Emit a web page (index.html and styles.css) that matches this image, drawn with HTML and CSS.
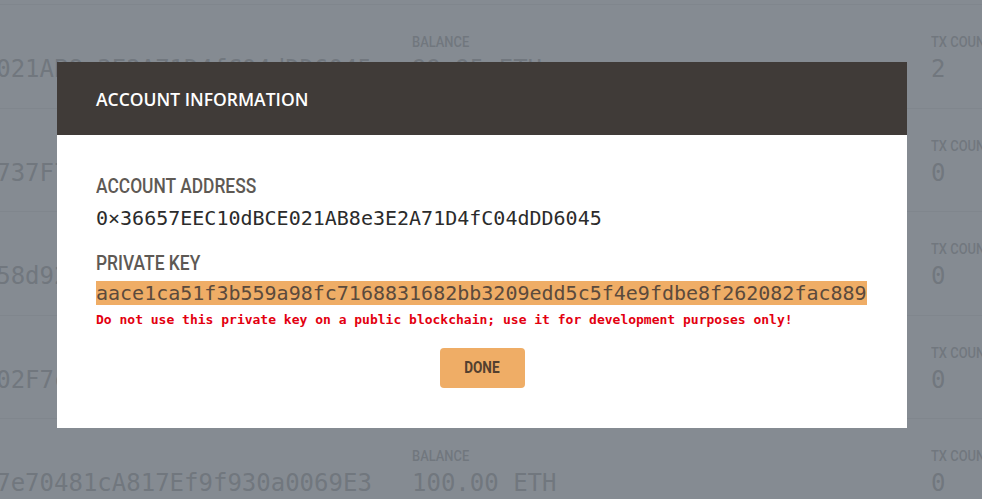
FILE: index.html
```html
<!DOCTYPE html>
<html lang="en">
<head>
<meta charset="utf-8">
<title>Accounts</title>
<link rel="stylesheet" href="styles.css">
</head>
<body>
<div class="accounts">
  <div class="row">
    <div class="cell cell-address"><div class="label">ADDRESS</div><div class="value">0x0Fa1c93E4b7D2e58C6a0B9174dE3f2A8c5B01d9E</div></div>
    <div class="cell cell-balance"><div class="label">BALANCE</div><div class="value">100.00 ETH</div></div>
    <div class="cell cell-tx"><div class="label">TX COUNT</div><div class="value">0</div></div>
  </div>
  <div class="row">
    <div class="cell cell-address"><div class="label">ADDRESS</div><div class="value">0x36657EEC10dBCE021AB8e3E2A71D4fC04dDD6045</div></div>
    <div class="cell cell-balance"><div class="label">BALANCE</div><div class="value">99.95 ETH</div></div>
    <div class="cell cell-tx"><div class="label">TX COUNT</div><div class="value">2</div></div>
  </div>
  <div class="row">
    <div class="cell cell-address"><div class="label">ADDRESS</div><div class="value">0xA1c94fE20b3D85737F7c2A4e0B19d5C83f1aB479</div></div>
    <div class="cell cell-balance"><div class="label">BALANCE</div><div class="value">100.00 ETH</div></div>
    <div class="cell cell-tx"><div class="label">TX COUNT</div><div class="value">0</div></div>
  </div>
  <div class="row">
    <div class="cell cell-address"><div class="label">ADDRESS</div><div class="value">0x4C7e2b90aF13dE58d92Ab0c41F7e3D9b2A06c8e1</div></div>
    <div class="cell cell-balance"><div class="label">BALANCE</div><div class="value">100.00 ETH</div></div>
    <div class="cell cell-tx"><div class="label">TX COUNT</div><div class="value">0</div></div>
  </div>
  <div class="row">
    <div class="cell cell-address"><div class="label">ADDRESS</div><div class="value">0x9bE3a47C1d05F802F7c6B4A9d13e85F0a72cB1d4</div></div>
    <div class="cell cell-balance"><div class="label">BALANCE</div><div class="value">100.00 ETH</div></div>
    <div class="cell cell-tx"><div class="label">TX COUNT</div><div class="value">0</div></div>
  </div>
  <div class="row">
    <div class="cell cell-address"><div class="label">ADDRESS</div><div class="value">0xD2f85a3B61c9E07e70481cA817Ef9f930a0069E3</div></div>
    <div class="cell cell-balance"><div class="label">BALANCE</div><div class="value">100.00 ETH</div></div>
    <div class="cell cell-tx"><div class="label">TX COUNT</div><div class="value">0</div></div>
  </div>
</div>

<div class="overlay">
  <div class="modal">
    <div class="modal-header">
      <h2 class="modal-title">ACCOUNT INFORMATION</h2>
    </div>
    <div class="modal-body">
      <h3 class="field-label">ACCOUNT ADDRESS</h3>
      <div class="mono-line">0×36657EEC10dBCE021AB8e3E2A71D4fC04dDD6045</div>
      <h3 class="field-label field-label-key">PRIVATE KEY</h3>
      <div class="mono-line key-line"><span class="key">aace1ca51f3b559a98fc7168831682bb3209edd5c5f4e9fdbe8f262082fac889</span></div>
      <div class="warning">Do not use this private key on a public blockchain; use it for development purposes only!</div>
      <div class="actions">
        <button class="btn-done" type="button"><span class="btn-text">DONE</span></button>
      </div>
    </div>
  </div>
</div>
</body>
</html>
```

FILE: styles.css
```css
html, body {
  margin: 0;
  padding: 0;
}

body {
  width: 982px;
  height: 499px;
  overflow: hidden;
  background: #ffffff;
  font-family: "Liberation Sans", Arial, sans-serif;
}

.accounts {
  margin-top: -98.5px;
}

.row {
  box-sizing: border-box;
  height: 103.5px;
  border-bottom: 1px solid #e4e4e4;
  display: flex;
  padding-top: 30px;
}

.cell-address {
  margin-left: -235px;
  width: 647px;
  flex: none;
}

.cell-balance {
  width: 519px;
  flex: none;
}

.cell-tx {
  flex: none;
  white-space: nowrap;
}

.label {
  font-family: "Roboto", sans-serif;
  font-weight: 500;
  font-size: 15px;
  line-height: 15px;
  color: #9c9c9c;
  white-space: nowrap;
  transform: scaleX(0.86);
  transform-origin: left center;
}

.value {
  margin-top: 7px;
  font-family: "DejaVu Sans Mono", "Liberation Mono", monospace;
  font-size: 24px;
  line-height: 24px;
  color: #999999;
  white-space: nowrap;
}

.overlay {
  position: fixed;
  inset: 0;
  background: rgba(103, 110, 119, 0.8);
  display: flex;
  align-items: flex-start;
  padding: 62px 0 0 57px;
}

.modal {
  width: 850px;
  background: #ffffff;
}

.modal-header {
  height: 73px;
  background: #403b38;
  padding: 0 39px;
  display: flex;
  align-items: center;
}

.modal-title {
  margin: 0;
  font-family: "Open Sans", sans-serif;
  font-weight: 600;
  font-size: 17.5px;
  color: #ffffff;
}

.modal-body {
  padding: 40px 39px 40px 39px;
}

.field-label {
  margin: 0;
  font-family: "Roboto", sans-serif;
  font-weight: 500;
  font-size: 20px;
  line-height: 22px;
  color: #5e5954;
  transform: scaleX(0.87);
  transform-origin: left center;
}

.field-label-key {
  margin-top: 21px;
}

.mono-line {
  margin-top: 8px;
  font-family: "DejaVu Sans Mono", "Liberation Mono", monospace;
  font-size: 20px;
  line-height: 26px;
  color: #2b2b2b;
  white-space: nowrap;
}

.key-line {
  margin-top: 6px;
}

.key {
  background: #efad66;
  color: #5b4a3c;
}

.warning {
  margin-top: 6px;
  font-family: "DejaVu Sans Mono", "Liberation Mono", monospace;
  font-weight: bold;
  font-size: 13px;
  line-height: 16px;
  color: #e3000f;
  white-space: nowrap;
}

.actions {
  display: flex;
  justify-content: center;
  margin-top: 20px;
}

.btn-done {
  width: 85px;
  height: 40px;
  border: none;
  border-radius: 4px;
  background: #efad66;
  color: #53402f;
  padding: 0;
  cursor: pointer;
  display: flex;
  align-items: center;
  justify-content: center;
}

.btn-text {
  display: inline-block;
  font-family: "Roboto", sans-serif;
  font-weight: bold;
  font-size: 16px;
  line-height: 16px;
  transform: scaleX(0.85);
}
```
